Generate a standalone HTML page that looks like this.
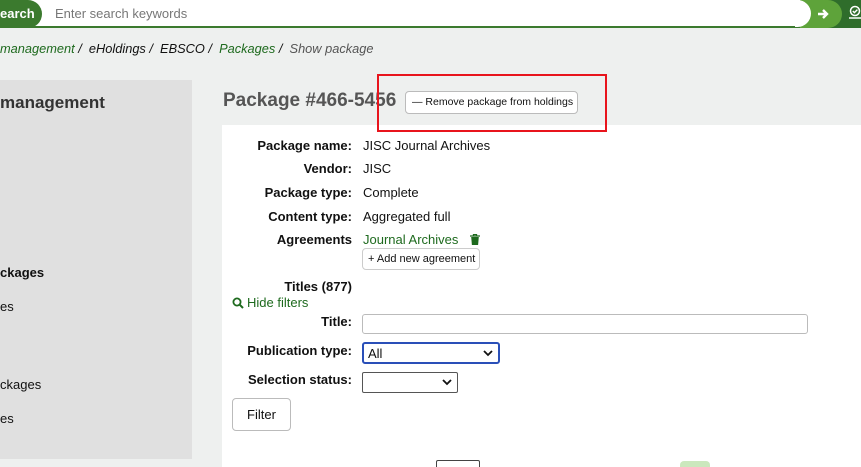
<!DOCTYPE html>
<html><head><meta charset="utf-8"><style>
*{box-sizing:border-box;margin:0;padding:0}
html,body{width:861px;height:467px;overflow:hidden}
body{background:#eef0ef;font-family:"Liberation Sans",sans-serif;font-size:13px;color:#111;position:relative}
.a{position:absolute;white-space:nowrap}
.lbl{font-weight:bold;text-align:right;width:130px}
.g{color:#1e6a1e}
svg.chev{position:absolute;right:5px;top:6px}
</style></head><body>
<div class="a" style="left:0;top:0;width:861px;height:28px;background:#fff;border-bottom:2px solid #3b7a2e"></div>
<div class="a" style="left:-20px;top:0;width:62px;height:28px;background:#3b7a2e;border-radius:0 14px 14px 0;color:#fff;font-weight:bold;font-size:13px;line-height:27px;padding-left:20px">earch</div>
<div class="a" style="left:55px;top:6px;color:#777;font-size:13px">Enter search keywords</div>
<div class="a" style="left:800px;top:0;width:61px;height:28px;background:#2f6d2b"></div>
<div class="a" style="left:800px;top:0;width:42px;height:28px;background:#5ea33a;border-radius:0 14px 14px 0"></div>
<div class="a" style="left:795px;top:0;width:16px;height:27px;background:#fff;border-radius:0 14px 14px 0"></div>
<svg class="a" style="left:816px;top:7px" width="14" height="14" viewBox="0 0 14 14"><path d="M2 7h9M7 3l4 4-4 4" stroke="#fff" stroke-width="2.4" fill="none"/></svg>
<svg class="a" style="left:849px;top:5px" width="12" height="16" viewBox="0 0 12 16"><circle cx="6" cy="6" r="4.5" stroke="#fff" stroke-width="1.5" fill="none"/><path d="M3.8 6l1.6 1.6 3-3" stroke="#fff" stroke-width="1.4" fill="none"/><path d="M0 13h12" stroke="#fff" stroke-width="1.5"/></svg>
<div class="a" style="left:0;top:41px;font-style:italic;font-size:12.8px"><span class="g">management</span> / &nbsp;eHoldings / &nbsp;EBSCO / &nbsp;<span class="g">Packages</span> / &nbsp;<span style="color:#555">Show package</span></div>
<div class="a" style="left:0;top:80px;width:192px;height:379px;background:#e0e0e0"></div>
<div class="a" style="left:0;top:93px;font-weight:bold;font-size:17px;color:#333">management</div>
<div class="a" style="left:0;top:265px;font-weight:bold">ckages</div>
<div class="a" style="left:0;top:299px">es</div>
<div class="a" style="left:0;top:377px">ckages</div>
<div class="a" style="left:0;top:411px">es</div>
<div class="a" style="left:223px;top:90px;font-weight:bold;font-size:19px;color:#555">Package #466-5456</div>
<div class="a" style="left:405px;top:91px;width:173px;height:23px;background:#fff;border:1px solid #bbb;border-radius:4px;font-size:10.5px;line-height:21px;padding-left:6px">&#8212; Remove package from holdings</div>
<div class="a" style="left:222px;top:125px;width:639px;height:342px;background:#fff"></div>
<div class="a" style="left:377px;top:74px;width:230px;height:58px;border:2px solid #e8141c"></div>
<div class="a lbl" style="left:222px;top:138px">Package name:</div><div class="a" style="left:363px;top:138px">JISC Journal Archives</div>
<div class="a lbl" style="left:222px;top:161px">Vendor:</div><div class="a" style="left:363px;top:161px">JISC</div>
<div class="a lbl" style="left:222px;top:185px">Package type:</div><div class="a" style="left:363px;top:185px">Complete</div>
<div class="a lbl" style="left:222px;top:209px">Content type:</div><div class="a" style="left:363px;top:209px">Aggregated full</div>
<div class="a lbl" style="left:222px;top:232px">Agreements</div><div class="a g" style="left:363px;top:232px">Journal Archives</div>
<svg class="a" style="left:470px;top:234px" width="10" height="11" viewBox="0 0 10 11"><path d="M0 2h10M3.5 2V0.5h3V2" stroke="#1e6a1e" stroke-width="1.3" fill="none"/><path d="M1.2 3h7.6l-0.7 8H1.9z" fill="#1e6a1e"/></svg>
<div class="a" style="left:362px;top:248px;width:118px;height:22px;border:1px solid #ccc;border-radius:4px;font-size:11px;line-height:20px;padding-left:5px">+ Add new agreement</div>
<div class="a lbl" style="left:222px;top:279px">Titles (877)</div>
<svg class="a" style="left:232px;top:297px" width="12" height="12" viewBox="0 0 12 12"><circle cx="5" cy="5" r="3.6" stroke="#1e6a1e" stroke-width="1.8" fill="none"/><path d="M7.6 7.6l3.4 3.4" stroke="#1e6a1e" stroke-width="2"/></svg>
<div class="a g" style="left:247px;top:295px">Hide filters</div>
<div class="a lbl" style="left:222px;top:314px">Title:</div>
<div class="a" style="left:362px;top:314px;width:446px;height:20px;border:1px solid #bbb;border-radius:3px"></div>
<div class="a lbl" style="left:222px;top:343px">Publication type:</div>
<div class="a" style="left:362px;top:342px;width:138px;height:22px;border:2px solid #2a4fb8;border-radius:3px;padding:2px 4px">All<svg class="chev" width="10" height="7" viewBox="0 0 10 7"><path d="M1 1l4 4 4-4" stroke="#111" stroke-width="1.8" fill="none"/></svg></div>
<div class="a lbl" style="left:222px;top:372px">Selection status:</div>
<div class="a" style="left:362px;top:372px;width:96px;height:21px;border:1px solid #555;border-radius:2px"><svg class="chev" width="10" height="7" viewBox="0 0 10 7"><path d="M1 1l4 4 4-4" stroke="#111" stroke-width="1.8" fill="none"/></svg></div>
<div class="a" style="left:232px;top:398px;width:59px;height:33px;border:1px solid #bbb;border-radius:4px;text-align:center;line-height:31px">Filter</div>
<div class="a" style="left:436px;top:460px;width:44px;height:12px;border:1px solid #444;border-radius:2px"></div>
<div class="a" style="left:680px;top:461px;width:30px;height:10px;background:#cbe8bd;border-radius:4px"></div>
</body></html>
